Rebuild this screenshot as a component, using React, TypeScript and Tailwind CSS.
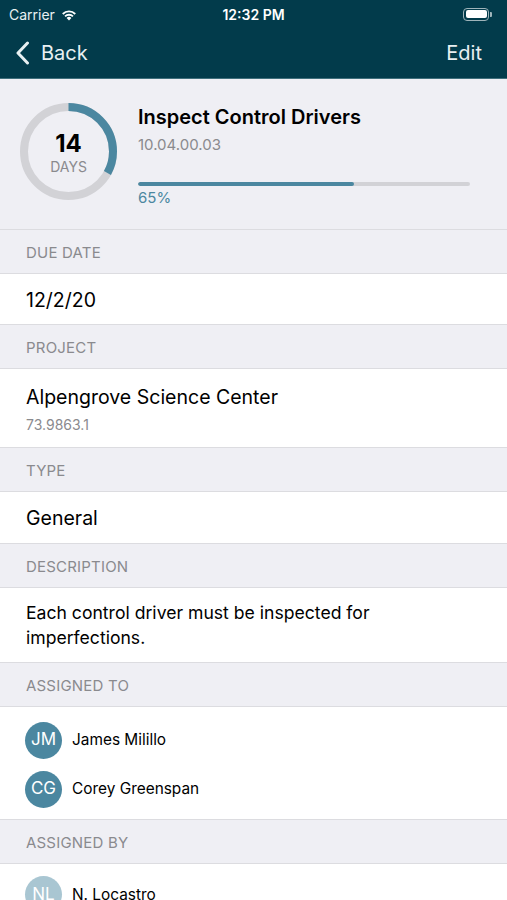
import React from "react";

const font = { fontFamily: "Inter, 'Liberation Sans', Arial, sans-serif" };

function SectionHeader({ label }: { label: string }) {
  return (
    <div className="h-[44px] flex items-center pl-[26px] pt-[3px] bg-[#efeff4] border-b border-[#dcdce0] text-[15px] text-[#8a8a8e] tracking-[0.2px]">
      {label}
    </div>
  );
}

function Avatar({ initials, faded }: { initials: string; faded?: boolean }) {
  return (
    <div
      className={`w-[37px] h-[37px] rounded-full flex items-center justify-center text-white text-[17px] ${
        faded ? "bg-[#a9c6d2]" : "bg-[#4b87a0]"
      }`}
    >
      {initials}
    </div>
  );
}

export default function App() {
  const ringR = 44.5;
  const circ = 2 * Math.PI * ringR;
  const frac = 0.33;
  return (
    <div className="w-[507px] h-[900px] overflow-hidden bg-[#efeff4]" style={font}>
      {/* Status + nav */}
      <div className="h-[79px] bg-[#023b4b] border-b border-[#3f6f7c] text-white flex flex-col">
        <div className="h-[28px] flex items-center justify-between px-[9px] relative">
          <div className="flex items-center gap-[5px] text-[14px] text-[#e8f0f2]">
            <span>Carrier</span>
            <svg width="18" height="13" viewBox="0 0 18 13">
              <path d="M9 12.5 L6.6 9.9 A3.4 3.4 0 0 1 11.4 9.9 Z" fill="white" />
              <path d="M4.4 7.7 A6.5 6.5 0 0 1 13.6 7.7 L12.3 9.1 A4.6 4.6 0 0 0 5.7 9.1 Z" fill="white" />
              <path d="M2.1 5.3 A9.8 9.8 0 0 1 15.9 5.3 L14.6 6.7 A7.9 7.9 0 0 0 3.4 6.7 Z" fill="white" />
            </svg>
          </div>
          <div className="absolute left-0 right-0 text-center text-[14px] font-semibold pointer-events-none">
            12:32 PM
          </div>
          <div className="flex items-center pr-[6px]">
            <div className="w-[26px] h-[13px] rounded-[4px] border border-[#9fb4ba] p-[1.5px]">
              <div className="w-full h-full rounded-[2px] bg-white" />
            </div>
            <div className="w-[2px] h-[5px] bg-[#9fb4ba] rounded-r-[1px] ml-[1px]" />
          </div>
        </div>
        <div className="flex-1 flex items-center justify-between pl-[15px] pr-[25px]">
          <div className="flex items-center gap-[11px]">
            <svg width="15" height="24" viewBox="0 0 15 24">
              <path d="M12.5 2 L3 12 L12.5 22" stroke="#e8f0f2" strokeWidth="3" fill="none" strokeLinecap="round" strokeLinejoin="round" />
            </svg>
            <span className="text-[20px] text-[#e8f0f2]">Back</span>
          </div>
          <span className="text-[20px] text-[#e8f0f2]">Edit</span>
        </div>
      </div>

      {/* Top summary */}
      <div className="h-[151px] bg-[#efeff4] border-b border-[#dcdce0] flex items-start">
        <div className="w-[138px] flex justify-start pl-[20px] pt-[24px]">
          <div className="relative w-[97px] h-[97px]">
            <svg width="97" height="97" viewBox="0 0 97 97" className="absolute inset-0">
              <circle cx="48.5" cy="48.5" r={ringR} stroke="#d2d2d6" strokeWidth="8" fill="none" />
              <circle
                cx="48.5"
                cy="48.5"
                r={ringR}
                stroke="#4b87a0"
                strokeWidth="8"
                fill="none"
                strokeDasharray={`${circ * frac} ${circ}`}
                transform="rotate(-90 48.5 48.5)"
              />
            </svg>
            <div className="absolute inset-0 flex flex-col items-center justify-center">
              <div className="text-[24px] font-bold text-black leading-[26px] mt-[-1px]">14</div>
              <div className="text-[14px] text-[#8a8a8e] leading-[18px] mt-[1px] mb-[-4px]">DAYS</div>
            </div>
          </div>
        </div>
        <div className="flex-1 pr-[37px] pt-[25px]">
          <div className="text-[20px] font-semibold text-black leading-[26px]">Inspect Control Drivers</div>
          <div className="text-[15px] text-[#8a8a8e] leading-[20px] mt-[5px]">10.04.00.03</div>
          <div className="mt-[27px] h-[4px] rounded-full bg-[#d2d2d6] overflow-hidden">
            <div className="h-full bg-[#4b87a0] rounded-full" style={{ width: "65%" }} />
          </div>
          <div className="text-[15px] text-[#4b87a0] leading-[20px] mt-[2px]">65%</div>
        </div>
      </div>

      <SectionHeader label="DUE DATE" />
      <div className="h-[51px] bg-white border-b border-[#dcdce0] flex items-center pl-[26px] pt-[3px] text-[19.5px] text-black">
        12/2/20
      </div>

      <SectionHeader label="PROJECT" />
      <div className="h-[79px] bg-white border-b border-[#dcdce0] flex flex-col justify-center pl-[26px] pt-[3px]">
        <div className="text-[19.5px] text-black leading-[24px]">Alpengrove Science Center</div>
        <div className="text-[14px] text-[#8a8a8e] leading-[18px] mt-[7px]">73.9863.1</div>
      </div>

      <SectionHeader label="TYPE" />
      <div className="h-[52px] bg-white border-b border-[#dcdce0] flex items-center pl-[26px] pt-[3px] text-[19.5px] text-black">
        General
      </div>

      <SectionHeader label="DESCRIPTION" />
      <div className="h-[75px] bg-white border-b border-[#dcdce0] flex items-center pl-[26px] pr-[90px] text-[17.6px] text-black leading-[25px]">
        Each control driver must be inspected for imperfections.
      </div>

      <SectionHeader label="ASSIGNED TO" />
      <div className="h-[113px] bg-white border-b border-[#dcdce0] flex flex-col justify-center gap-[12px] pl-[25px] pt-[3px]">
        <div className="flex items-center gap-[10px]">
          <Avatar initials="JM" />
          <span className="text-[15.4px] text-black">James Milillo</span>
        </div>
        <div className="flex items-center gap-[10px]">
          <Avatar initials="CG" />
          <span className="text-[15.4px] text-black">Corey Greenspan</span>
        </div>
      </div>

      <SectionHeader label="ASSIGNED BY" />
      <div className="h-[80px] bg-white flex items-start pt-[12px] pl-[25px]">
        <div className="flex items-center gap-[10px]">
          <Avatar initials="NL" faded />
          <span className="text-[15.4px] text-black">N. Locastro</span>
        </div>
      </div>
    </div>
  );
}
